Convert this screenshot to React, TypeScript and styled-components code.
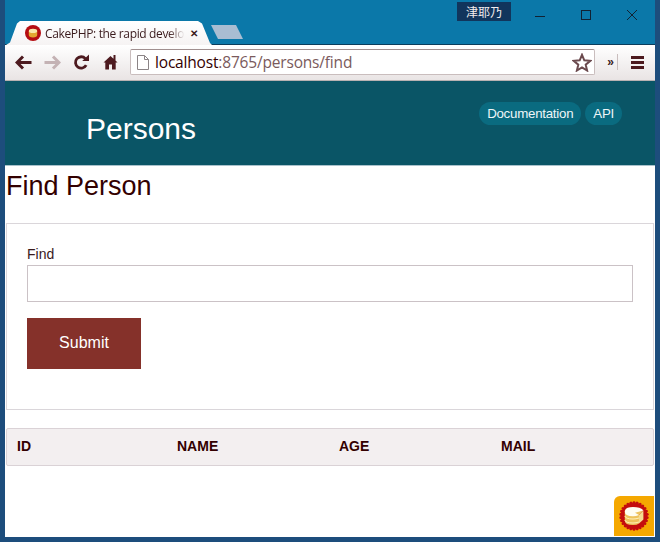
import React from "react";
import styled, { createGlobalStyle } from "styled-components";

const GlobalStyle = createGlobalStyle`
  html, body {
    margin: 0;
    padding: 0;
    background: #1d4d7c;
  }
  * {
    box-sizing: border-box;
  }
`;

const columns = ["ID", "NAME", "AGE", "MAIL"];

const BackIcon = ({ color }: { color: string }) => (
  <svg width="17" height="15" viewBox="0 0 17 15">
    <path d="M8 1.5 L2 7.5 L8 13.5 M2.5 7.5 H16.5" fill="none" stroke={color} strokeWidth="3" />
  </svg>
);

const ForwardIcon = ({ color }: { color: string }) => (
  <svg width="17" height="15" viewBox="0 0 17 15">
    <path d="M9 1.5 L15 7.5 L9 13.5 M14.5 7.5 H0.5" fill="none" stroke={color} strokeWidth="3" />
  </svg>
);

const ReloadIcon = () => (
  <svg width="17" height="17" viewBox="0 0 17 17">
    <path d="M13.2 11.2 A5.7 5.7 0 1 1 12.4 4.6" fill="none" stroke="#4d1a1f" strokeWidth="2.8" />
    <path d="M9.2 7 H16 V0.5 Z" fill="#4d1a1f" />
  </svg>
);

const HomeIcon = () => (
  <svg width="15" height="16" viewBox="0 0 15 16">
    <path
      d="M7.5 2 L0.5 8.5 L2.3 8.5 V15.5 H6 V10.5 H9 V15.5 H12.7 V8.5 H14.5 L12.5 6.6 V1 H10.5 V4.8 Z"
      fill="#4d1a1f"
    />
  </svg>
);

const PageIcon = () => (
  <svg width="12" height="15" viewBox="0 0 12 15">
    <path d="M0.5 0.5 H7.5 L11.5 4.5 V14.5 H0.5 Z M7.5 0.5 V4.5 H11.5" fill="#fff" stroke="#8b8486" />
  </svg>
);

const StarIcon = () => (
  <svg width="20" height="19" viewBox="0 0 20 19">
    <path
      d="M10 1.8 L12.3 7.3 L18.3 7.8 L13.7 11.7 L15.1 17.5 L10 14.4 L4.9 17.5 L6.3 11.7 L1.7 7.8 L7.7 7.3 Z"
      fill="#fff"
      stroke="#6b4a4e"
      strokeWidth="2"
    />
  </svg>
);

const Favicon = () => (
  <svg width="16" height="16" viewBox="0 0 16 16">
    <circle cx="8" cy="8" r="8" fill="#b50d12" />
    <path d="M3.8 6 V10 Q3.8 12.4 8 12.4 Q12.2 12.4 12.2 10 V6 Z" fill="#e3a72f" />
    <path d="M3.8 6 Q3.8 3.8 8 3.8 Q12.2 3.8 12.2 6 Q12.2 8 8 8 Q3.8 8 3.8 6 Z" fill="#f8e8a8" />
  </svg>
);

const CakeSeal = () => {
  const teeth = Array.from({ length: 26 }, (_, i) => (i * 360) / 26);
  return (
    <svg width="30" height="30" viewBox="0 0 30 30">
      {teeth.map((a) => (
        <circle key={a} cx="15" cy="1.6" r="1.4" fill="#c40d0d" transform={`rotate(${a} 15 15)`} />
      ))}
      <circle cx="15" cy="15" r="13.4" fill="#c40d0d" />
      <path d="M5.8 10.5 V19.5 Q5.8 24 14 24 Q18 24 20 22.5 V14 L24.4 9.4 H5.8 Z" fill="#eec35c" />
      <path
        d="M5.8 15 Q6.5 18 14 18 Q17 18 20 17 M5.8 19 Q6.5 22 14 22 Q17 22 20 21"
        fill="none"
        stroke="#fff0b8"
        strokeWidth="1"
      />
      <path d="M5.8 10.5 Q5.8 6 14 6 Q22 6 24.4 9.4 L16 11.8 L20 14 Q17 15.2 14 15.2 Q5.8 15.2 5.8 10.5 Z" fill="#fffdf0" />
      <path d="M20 14 L24.4 9.4 V18.5 L20 22.5 Z" fill="#f4dc90" />
    </svg>
  );
};

const App = () => {
  return (
    <>
      <GlobalStyle />
      <Frame>
        <TitleBar>
          <Tabs>
            <ActiveTab>
              <Favicon />
              <TabTitle>CakePHP: the rapid develo</TabTitle>
              <TabClose>✕</TabClose>
            </ActiveTab>
            <NewTab />
          </Tabs>
          <WindowArea>
            <UserBadge>津耶乃</UserBadge>
            <WindowButton>
              <svg width="12" height="12" viewBox="0 0 12 12">
                <path d="M1 7.5 H11" stroke="#123" strokeWidth="1" />
              </svg>
            </WindowButton>
            <WindowButton>
              <svg width="12" height="12" viewBox="0 0 12 12">
                <rect x="1.5" y="1.5" width="9" height="9" fill="none" stroke="#123" />
              </svg>
            </WindowButton>
            <WindowButton>
              <svg width="12" height="12" viewBox="0 0 12 12">
                <path d="M1 1 L11 11 M11 1 L1 11" stroke="#123" strokeWidth="1" />
              </svg>
            </WindowButton>
          </WindowArea>
        </TitleBar>
        <Toolbar>
          <NavButtons>
            <NavButton><BackIcon color="#4d1a1f" /></NavButton>
            <NavButton><ForwardIcon color="#c4b2b4" /></NavButton>
            <NavButton><ReloadIcon /></NavButton>
            <NavButton><HomeIcon /></NavButton>
          </NavButtons>
          <AddressBar>
            <PageIcon />
            <AddressText>
              <Host>localhost</Host>:8765/persons/find
            </AddressText>
            <StarIcon />
          </AddressBar>
          <Overflow>»</Overflow>
          <Menu>
            <span />
            <span />
            <span />
          </Menu>
        </Toolbar>
        <Page>
          <Header>
            <HeaderTitle>Persons</HeaderTitle>
            <HeaderLinks>
              <Pill>Documentation</Pill>
              <Pill>API</Pill>
            </HeaderLinks>
          </Header>
          <PageTitle>Find Person</PageTitle>
          <FormPanel>
            <FieldLabel htmlFor="find">Find</FieldLabel>
            <FieldInput id="find" type="text" />
            <SubmitButton type="submit">Submit</SubmitButton>
          </FormPanel>
          <TableHead>
            {columns.map((c) => (
              <HeadCell key={c}>{c}</HeadCell>
            ))}
          </TableHead>
          <CakeBadge>
            <CakeSeal />
          </CakeBadge>
        </Page>
      </Frame>
    </>
  );
};

const Frame = styled.div`
  width: 660px;
  height: 542px;
  display: flex;
  flex-direction: column;
  padding: 0 5px 5px 5px;
  background: #1d4d7c;
  font-family: "Liberation Sans", Arial, sans-serif;
  color: #300;
  overflow: hidden;
`;

const TitleBar = styled.div`
  height: 45px;
  flex: none;
  display: flex;
  justify-content: space-between;
  background: #0b78a9;
  border-bottom: 1px solid #0a3d5c;
`;

const Tabs = styled.div`
  display: flex;
  align-items: flex-end;
  padding-left: 1px;
`;

const ActiveTab = styled.div`
  width: 206px;
  height: 24px;
  display: flex;
  align-items: center;
  gap: 4px;
  padding: 0 14px 0 19px;
  margin-bottom: -1px;
  background: linear-gradient(#ffffff, #f6f3f3);
  clip-path: polygon(0 100%, 4px 90%, 11px 10%, 14px 0, 192px 0, 196px 10%, 204px 92%, 206px 100%);
`;

const TabTitle = styled.span`
  flex: 1;
  min-width: 0;
  white-space: nowrap;
  font-family: "Open Sans", sans-serif;
  font-size: 12px;
  letter-spacing: -0.35px;
  color: #3a1a1c;
  mask-image: linear-gradient(to right, #000 88%, transparent 99%);
`;

const TabClose = styled.span`
  font-size: 10px;
  font-weight: bold;
  color: #3a1a1c;
`;

const NewTab = styled.div`
  width: 32px;
  height: 14px;
  margin: 0 0 5px -1px;
  background: #a9bdd2;
  clip-path: polygon(0 0, 25px 0, 32px 100%, 7px 100%);
`;

const WindowArea = styled.div`
  display: flex;
  align-items: flex-start;
`;

const UserBadge = styled.div`
  width: 54px;
  height: 19px;
  margin: 2px 6px 0 0;
  display: flex;
  align-items: center;
  justify-content: center;
  background: #11355c;
  color: #f4eeee;
  font-family: "Noto Sans CJK JP", sans-serif;
  font-size: 12px;
`;

const WindowButton = styled.div`
  width: 46px;
  height: 30px;
  display: flex;
  align-items: center;
  justify-content: center;
`;

const Toolbar = styled.div`
  height: 36px;
  flex: none;
  display: flex;
  align-items: center;
  padding: 0 7px 1px 4px;
  background: linear-gradient(#ffffff, #e9e4e4);
  border-bottom: 1px solid #b9b2b2;
`;

const NavButtons = styled.div`
  display: flex;
  align-items: center;
`;

const NavButton = styled.div`
  width: 29px;
  display: flex;
  justify-content: center;
`;

const AddressBar = styled.div`
  width: 465px;
  height: 26px;
  margin-left: 5px;
  display: flex;
  align-items: center;
  padding: 0 2px 0 6px;
  background: #fff;
  border: 1px solid #c9bdbd;
  border-top-color: #a08f8f;
  border-radius: 2px;
`;

const AddressText = styled.div`
  flex: 1;
  margin-left: 6px;
  font-family: "Open Sans", sans-serif;
  font-size: 15.5px;
  letter-spacing: -0.18px;
  color: #7a5a5c;
  white-space: nowrap;
`;

const Host = styled.span`
  color: #300;
`;

const Overflow = styled.div`
  width: 23px;
  text-align: right;
  padding-right: 3px;
  border-right: 1px solid #c9bdbd;
  font-size: 12px;
  line-height: 16px;
  font-weight: bold;
  color: #3a1a1c;
`;

const Menu = styled.div`
  margin-left: 13px;
  display: flex;
  flex-direction: column;
  gap: 2px;

  span {
    display: block;
    width: 13px;
    height: 3px;
    background: #4d1a1f;
  }
`;

const Page = styled.div`
  position: relative;
  flex: 1;
  min-height: 0;
  padding: 0 1px;
  background: #fff;
`;

const Header = styled.header`
  height: 85px;
  display: flex;
  justify-content: space-between;
  margin: 0 -1px;
  padding: 21px 33px 0 81px;
  background: #0a5566;
  border-bottom: 1px solid #a9c2cc;
`;

const HeaderTitle = styled.h1`
  margin: 10px 0 0;
  font-size: 30px;
  line-height: 34px;
  font-weight: normal;
  color: #fff;
`;

const HeaderLinks = styled.nav`
  display: flex;
  align-items: flex-start;
  gap: 4px;
`;

const Pill = styled.a`
  height: 23px;
  padding: 0 8px;
  display: flex;
  align-items: center;
  border-radius: 12px;
  background: #0a6b80;
  color: #eef6f8;
  font-size: 13.3px;
  letter-spacing: -0.25px;
`;

const PageTitle = styled.h2`
  margin: 5px 0 0;
  height: 52px;
  font-size: 27px;
  line-height: 31px;
  font-weight: normal;
  color: #300;
`;

const FormPanel = styled.form`
  height: 187px;
  display: flex;
  flex-direction: column;
  align-items: flex-start;
  padding: 21px 20px 0 20px;
  border: 1px solid #dad6da;
`;

const FieldLabel = styled.label`
  font-size: 14px;
  line-height: 18px;
  color: #3a1a1c;
`;

const FieldInput = styled.input`
  width: 606px;
  height: 37px;
  margin: 2px 0 16px;
  border: 1px solid #cbc2c6;
  background: #fff;
`;

const SubmitButton = styled.button`
  width: 114px;
  height: 51px;
  padding: 0 0 2px;
  border: none;
  background: #85312a;
  color: #fff;
  font-family: inherit;
  font-size: 16px;
`;

const TableHead = styled.div`
  height: 38px;
  margin-top: 18px;
  display: grid;
  grid-template-columns: 160px repeat(3, 162px);
  align-items: center;
  padding: 0 0 2px 10px;
  background: #f3eff0;
  border: 1px solid #dad2d6;
  border-radius: 2px;
`;

const HeadCell = styled.div`
  font-size: 14px;
  font-weight: bold;
  color: #300;
`;

const CakeBadge = styled.div`
  position: absolute;
  right: 1px;
  bottom: 1px;
  width: 40px;
  height: 40px;
  display: flex;
  align-items: center;
  justify-content: center;
  background: #f5a800;
  border-top-left-radius: 6px;
`;

export default App;
